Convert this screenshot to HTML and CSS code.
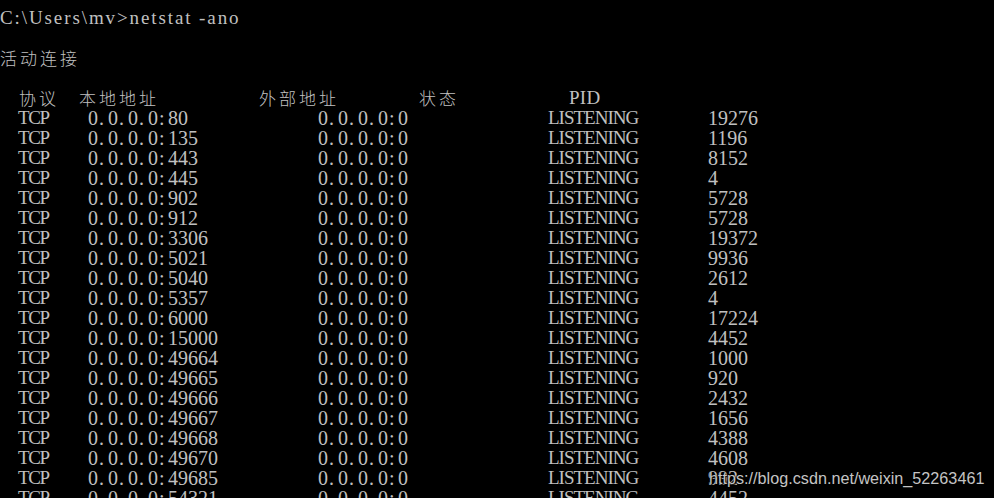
FILE: index.html
```html
<!DOCTYPE html>
<html lang="zh-CN">
<head>
<meta charset="utf-8">
<title>netstat -ano</title>
<link rel="stylesheet" href="styles.css">
</head>
<body>
<main class="console">
  <div class="line cmd">C:\Users\mv&gt;netstat -ano</div>
  <div class="line"></div>
  <div class="line cjk">活动连接</div>
  <div class="line"></div>
  <div class="row head cjk">
    <span>协议</span><span>本地地址</span><span>外部地址</span><span>状态</span><span class="pidh">PID</span>
  </div>
  <div class="row"><span class="p">TCP</span><span class="ip">0<i>.</i>0<i>.</i>0<i>.</i>0<i>:</i>80</span><span class="ip">0<i>.</i>0<i>.</i>0<i>.</i>0<i>:</i>0</span><span class="st">LISTENING</span><span class="n">19276</span></div>
  <div class="row"><span class="p">TCP</span><span class="ip">0<i>.</i>0<i>.</i>0<i>.</i>0<i>:</i>135</span><span class="ip">0<i>.</i>0<i>.</i>0<i>.</i>0<i>:</i>0</span><span class="st">LISTENING</span><span class="n">1196</span></div>
  <div class="row"><span class="p">TCP</span><span class="ip">0<i>.</i>0<i>.</i>0<i>.</i>0<i>:</i>443</span><span class="ip">0<i>.</i>0<i>.</i>0<i>.</i>0<i>:</i>0</span><span class="st">LISTENING</span><span class="n">8152</span></div>
  <div class="row"><span class="p">TCP</span><span class="ip">0<i>.</i>0<i>.</i>0<i>.</i>0<i>:</i>445</span><span class="ip">0<i>.</i>0<i>.</i>0<i>.</i>0<i>:</i>0</span><span class="st">LISTENING</span><span class="n">4</span></div>
  <div class="row"><span class="p">TCP</span><span class="ip">0<i>.</i>0<i>.</i>0<i>.</i>0<i>:</i>902</span><span class="ip">0<i>.</i>0<i>.</i>0<i>.</i>0<i>:</i>0</span><span class="st">LISTENING</span><span class="n">5728</span></div>
  <div class="row"><span class="p">TCP</span><span class="ip">0<i>.</i>0<i>.</i>0<i>.</i>0<i>:</i>912</span><span class="ip">0<i>.</i>0<i>.</i>0<i>.</i>0<i>:</i>0</span><span class="st">LISTENING</span><span class="n">5728</span></div>
  <div class="row"><span class="p">TCP</span><span class="ip">0<i>.</i>0<i>.</i>0<i>.</i>0<i>:</i>3306</span><span class="ip">0<i>.</i>0<i>.</i>0<i>.</i>0<i>:</i>0</span><span class="st">LISTENING</span><span class="n">19372</span></div>
  <div class="row"><span class="p">TCP</span><span class="ip">0<i>.</i>0<i>.</i>0<i>.</i>0<i>:</i>5021</span><span class="ip">0<i>.</i>0<i>.</i>0<i>.</i>0<i>:</i>0</span><span class="st">LISTENING</span><span class="n">9936</span></div>
  <div class="row"><span class="p">TCP</span><span class="ip">0<i>.</i>0<i>.</i>0<i>.</i>0<i>:</i>5040</span><span class="ip">0<i>.</i>0<i>.</i>0<i>.</i>0<i>:</i>0</span><span class="st">LISTENING</span><span class="n">2612</span></div>
  <div class="row"><span class="p">TCP</span><span class="ip">0<i>.</i>0<i>.</i>0<i>.</i>0<i>:</i>5357</span><span class="ip">0<i>.</i>0<i>.</i>0<i>.</i>0<i>:</i>0</span><span class="st">LISTENING</span><span class="n">4</span></div>
  <div class="row"><span class="p">TCP</span><span class="ip">0<i>.</i>0<i>.</i>0<i>.</i>0<i>:</i>6000</span><span class="ip">0<i>.</i>0<i>.</i>0<i>.</i>0<i>:</i>0</span><span class="st">LISTENING</span><span class="n">17224</span></div>
  <div class="row"><span class="p">TCP</span><span class="ip">0<i>.</i>0<i>.</i>0<i>.</i>0<i>:</i>15000</span><span class="ip">0<i>.</i>0<i>.</i>0<i>.</i>0<i>:</i>0</span><span class="st">LISTENING</span><span class="n">4452</span></div>
  <div class="row"><span class="p">TCP</span><span class="ip">0<i>.</i>0<i>.</i>0<i>.</i>0<i>:</i>49664</span><span class="ip">0<i>.</i>0<i>.</i>0<i>.</i>0<i>:</i>0</span><span class="st">LISTENING</span><span class="n">1000</span></div>
  <div class="row"><span class="p">TCP</span><span class="ip">0<i>.</i>0<i>.</i>0<i>.</i>0<i>:</i>49665</span><span class="ip">0<i>.</i>0<i>.</i>0<i>.</i>0<i>:</i>0</span><span class="st">LISTENING</span><span class="n">920</span></div>
  <div class="row"><span class="p">TCP</span><span class="ip">0<i>.</i>0<i>.</i>0<i>.</i>0<i>:</i>49666</span><span class="ip">0<i>.</i>0<i>.</i>0<i>.</i>0<i>:</i>0</span><span class="st">LISTENING</span><span class="n">2432</span></div>
  <div class="row"><span class="p">TCP</span><span class="ip">0<i>.</i>0<i>.</i>0<i>.</i>0<i>:</i>49667</span><span class="ip">0<i>.</i>0<i>.</i>0<i>.</i>0<i>:</i>0</span><span class="st">LISTENING</span><span class="n">1656</span></div>
  <div class="row"><span class="p">TCP</span><span class="ip">0<i>.</i>0<i>.</i>0<i>.</i>0<i>:</i>49668</span><span class="ip">0<i>.</i>0<i>.</i>0<i>.</i>0<i>:</i>0</span><span class="st">LISTENING</span><span class="n">4388</span></div>
  <div class="row"><span class="p">TCP</span><span class="ip">0<i>.</i>0<i>.</i>0<i>.</i>0<i>:</i>49670</span><span class="ip">0<i>.</i>0<i>.</i>0<i>.</i>0<i>:</i>0</span><span class="st">LISTENING</span><span class="n">4608</span></div>
  <div class="row"><span class="p">TCP</span><span class="ip">0<i>.</i>0<i>.</i>0<i>.</i>0<i>:</i>49685</span><span class="ip">0<i>.</i>0<i>.</i>0<i>.</i>0<i>:</i>0</span><span class="st">LISTENING</span><span class="n">992</span></div>
  <div class="row"><span class="p">TCP</span><span class="ip">0<i>.</i>0<i>.</i>0<i>.</i>0<i>:</i>54321</span><span class="ip">0<i>.</i>0<i>.</i>0<i>.</i>0<i>:</i>0</span><span class="st">LISTENING</span><span class="n">4452</span></div>
</main>
<div class="watermark">https://blog.csdn.net/weixin_52263461</div>
</body>
</html>
```
FILE: styles.css
```css
html, body {
  margin: 0;
  padding: 0;
  background: #000;
  height: 498px;
  overflow: hidden;
}

body {
  position: relative;
  color: #c0c0c0;
  font-family: "Liberation Serif", "Noto Sans CJK SC", serif;
  font-size: 20px;
}

.console {
  padding-top: 8px;
}

.line {
  height: 20px;
  line-height: 20px;
  white-space: pre;
}

.cmd {
  font-size: 19px;
  letter-spacing: 1.9px;
}

.cjk {
  font-family: "Noto Sans CJK SC", sans-serif;
  font-size: 17px;
  letter-spacing: 3px;
  font-weight: 300;
}

.row {
  height: 20px;
  line-height: 20px;
  display: grid;
  grid-template-columns: 70px 230px 230px 160px auto;
  padding-left: 18px;
  white-space: pre;
  font-size: 20px;
}

.row .p {
  font-size: 19px;
  letter-spacing: -1.4px;
}

.row .st {
  font-size: 19px;
  letter-spacing: -1px;
}

.ip i {
  display: inline-block;
  width: 10px;
  font-style: normal;
  text-indent: 1px;
}

.row.head {
  grid-template-columns: 60px 180px 160px 150px auto;
  padding-left: 19px;
  font-size: 17px;
}

.row.head .pidh {
  font-family: "Liberation Serif", serif;
  font-size: 19px;
  letter-spacing: 0.3px;
  font-weight: 400;
}

.watermark {
  position: absolute;
  left: 709px;
  top: 467px;
  font-family: "Liberation Sans", Arial, sans-serif;
  font-size: 16.2px;
  color: #c4c4c4;
  text-shadow: 0 0 2px #000, 1px 1px 1px #000;
  line-height: 22px;
}
```
